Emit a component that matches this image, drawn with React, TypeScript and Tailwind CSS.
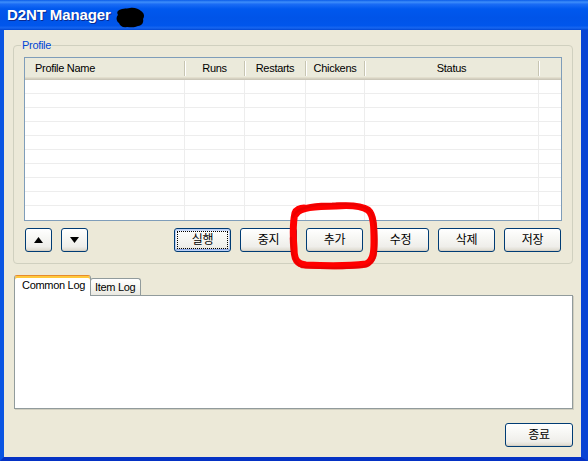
import React from "react";

const cols = [160, 60, 61, 59, 174, 23];

function XpButton({
  children,
  className = "",
  focused = false,
}: {
  children: React.ReactNode;
  className?: string;
  focused?: boolean;
}) {
  return (
    <div
      className={
        "h-[24px] rounded-[3px] border border-[#003C74] bg-[linear-gradient(to_bottom,#FFFFFF_0%,#F7F7F4_40%,#EFEEEA_80%,#DCD8CC_100%)] flex items-stretch text-[12px] text-black " +
        (focused
          ? "p-[2px] shadow-[inset_0_0_0_1px_#BCD0F6,inset_0_-2px_0_#8FA9E4,inset_0_2px_0_#CEDCF9] "
          : "p-[2px] shadow-[inset_0_-1px_0_#D6D0C5] ") +
        className
      }
    >
      <div
        className={
          "flex-1 flex items-center justify-center " +
          (focused ? "border border-dotted border-black" : "border border-transparent")
        }
      >
        {children}
      </div>
    </div>
  );
}

export default function App() {
  return (
    <div className="relative w-[588px] h-[461px] flex flex-col overflow-hidden font-['Liberation_Sans','Noto_Sans_CJK_KR',sans-serif] text-[11px] tracking-[-0.3px] text-black">
      {/* Title bar */}
      <div className="h-[30px] shrink-0 flex items-center pl-[7px] bg-[linear-gradient(to_bottom,#0A5CE8_0%,#3E8EFA_7%,#1A6CF5_14%,#0058EE_30%,#0054E8_60%,#0056EC_85%,#1766F0_93%,#0046D2_100%)]">
        <span className="text-[15px] font-bold text-white tracking-[-0.1px] [text-shadow:1px_1px_0_#0A2A8F]">
          D2NT Manager
        </span>
        <svg width="30" height="21" viewBox="0 0 30 21" className="ml-[4px] mt-[4px]">
          <path
            d="M3 4 C6 1, 11 2, 15 1 C19 0, 24 2, 26 4 C29 6, 30 9, 28 12 C29 15, 27 19, 23 19 C19 21, 15 20, 12 20 C8 21, 5 19, 4 16 C1 14, 1 10, 3 8 C2 6, 2 5, 3 4 Z"
            fill="#000"
          />
        </svg>
      </div>

      {/* Body with frame */}
      <div className="flex-1 flex flex-col bg-[#ECE9D8] border-l-[4px] border-r-[7px] border-b-[4px] border-l-[#0A55E2] border-r-[#0843D4] border-b-[#0532C4]">
        {/* Group box */}
        <div className="relative mt-[15px] ml-[9px] mr-[8px] h-[219px] border border-[#D0D0BF] rounded-[4px] pt-[11px] px-[10px] pb-[11px] flex flex-col">
          <span className="absolute left-[7px] top-[-8px] px-[1px] bg-[#ECE9D8] text-[#0046D5] text-[11px] leading-[14px]">
            Profile
          </span>

          {/* List view */}
          <div className="h-[164px] border border-[#7F9DB9] bg-white flex flex-col">
            <div className="grid grid-cols-[160px_60px_61px_59px_174px_23px] h-[22px] bg-[#EBEADB] shadow-[inset_0_-1px_0_#CBC7B8,inset_0_-2px_0_#D6D2C2,inset_0_-3px_0_#E2DECD]">
              {["Profile Name", "Runs", "Restarts", "Chickens", "Status", ""].map((t, i) => (
                <div key={i} className="flex items-center pb-[2px] whitespace-nowrap">
                  <span className={i === 0 ? "flex-1 pl-[10px]" : "flex-1 text-center"}>{t}</span>
                  {i < 5 && <div className="w-px h-[15px] bg-[#C7C5B2] shadow-[1px_0_0_#FFFFFF]" />}
                </div>
              ))}
            </div>
            {Array.from({ length: 10 }).map((_, r) => (
              <div
                key={r}
                className={
                  "grid grid-cols-[160px_60px_61px_59px_174px_23px] h-[14px] " +
                  (r < 9 ? "border-b border-[#EDEDED]" : "")
                }
              >
                {cols.map((_, c) => (
                  <div key={c} className={c < 5 ? "border-r border-[#EDEDED]" : ""} />
                ))}
              </div>
            ))}
          </div>

          {/* Buttons row */}
          <div className="mt-[7px] flex items-center px-[1px]">
            <XpButton className="w-[27px]">
              <svg width="9" height="6" viewBox="0 0 9 6">
                <path d="M4.5 0 L9 6 L0 6 Z" fill="#000" />
              </svg>
            </XpButton>
            <XpButton className="w-[27px] ml-[9px]">
              <svg width="9" height="6" viewBox="0 0 9 6">
                <path d="M0 0 L9 0 L4.5 6 Z" fill="#000" />
              </svg>
            </XpButton>
            <div className="ml-auto flex gap-[9px]">
              <XpButton className="w-[57px]" focused>
                실행
              </XpButton>
              <XpButton className="w-[57px]">중지</XpButton>
              <XpButton className="w-[57px]">추가</XpButton>
              <XpButton className="w-[57px]">수정</XpButton>
              <XpButton className="w-[57px]">삭제</XpButton>
              <XpButton className="w-[57px]">저장</XpButton>
            </div>
          </div>
        </div>

        {/* Tabs */}
        <div className="mt-[11px] ml-[10px] mr-[8px] flex flex-col">
          <div className="flex items-end h-[20px] whitespace-nowrap">
            <div className="relative z-10 w-[77px] h-[21px] mb-[-1px] bg-white border-x border-[#919B9C] rounded-t-[3px] shadow-[inset_0_2px_0_#FFC83C] border-t-[1px] border-t-[#E68B2C] flex items-center pl-[7px] pb-[2px]">
              Common Log
            </div>
            <div className="w-[51px] h-[17px] ml-[-1px] border border-b-0 border-[#919B9C] rounded-t-[3px] bg-[linear-gradient(to_bottom,#FFFFFF_0%,#F4F3EE_60%,#E9E8E1_100%)] flex items-center pl-[4px]">
              Item Log
            </div>
          </div>
          <div className="h-[114px] bg-white border border-[#919B9C] shadow-[1px_1px_0_#D0CEBF]" />
        </div>

        <div className="mt-[14px] mr-[8px] self-end">
          <XpButton className="w-[68px]">종료</XpButton>
        </div>
      </div>

      {/* Red hand-drawn circle over the 추가 button */}
      <svg
        className="absolute inset-0 pointer-events-none"
        width="588"
        height="461"
        viewBox="0 0 588 461"
      >
        <path
          d="M296 214 C300 207, 318 206, 336 206 C350 205, 362 206, 368 210 C374 215, 374 228, 374 242 C374 253, 373 261, 366 264 C350 266, 326 266, 306 265 C297 264, 294 260, 294 248 C293 236, 293 222, 295 213 C296 210, 300 208, 304 208"
          fill="none"
          stroke="#FF0000"
          strokeWidth="7"
          strokeLinecap="round"
          strokeLinejoin="round"
        />
        <path
          d="M293 217 C295 209, 312 204, 332 204 C352 203, 365 205, 371 212 C377 222, 377 236, 376 250 C376 258, 373 265, 362 267 C340 269, 318 268, 302 267 C293 263, 291 250, 291 238"
          fill="none"
          stroke="#E80000"
          strokeWidth="2.5"
          strokeLinecap="round"
          opacity="0.85"
        />
      </svg>
    </div>
  );
}
